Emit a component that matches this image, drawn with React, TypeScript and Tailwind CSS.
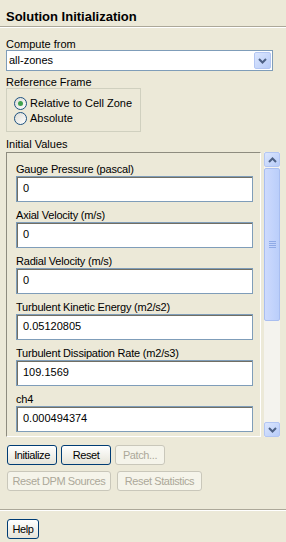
import React from "react";

function Chevron({ up }: { up?: boolean }) {
  return (
    <svg width="9" height="6" viewBox="0 0 9 6">
      <path
        d={up ? "M1 5 L4.5 1.5 L8 5" : "M1 1 L4.5 4.5 L8 1"}
        fill="none"
        stroke="#4d6185"
        strokeWidth="2"
      />
    </svg>
  );
}

function ScrollBtn({ up }: { up?: boolean }) {
  return (
    <div className="h-[15px] w-full rounded-[2px] border border-[#b3c6f3] bg-gradient-to-br from-[#dbe6fe] to-[#b8ccf8] flex items-center justify-center">
      <Chevron up={up} />
    </div>
  );
}

function Field({ label, value }: { label: string; value: string }) {
  return (
    <div className="flex flex-col shrink-0">
      <div className="h-[12px] leading-[12px] whitespace-nowrap tracking-[-0.2px]">{label}</div>
      <div className="mt-[1px] h-[26px] w-[237px] border border-[#7f9db9] bg-white">
        <div className="h-full border-t border-l border-t-[#716f64] border-l-[#716f64] flex items-center pl-[5px] pb-[2px]">
          {value}
        </div>
      </div>
    </div>
  );
}

function XPButton({ children, disabled, w }: { children: React.ReactNode; disabled?: boolean; w: string }) {
  return (
    <div
      className={
        "h-[20px] rounded-[3px] border flex items-center justify-center whitespace-nowrap tracking-[-0.4px] " +
        w +
        (disabled
          ? " border-[#c9c7ba] bg-[#f5f4ea] text-[#aca899]"
          : " border-[#003c74] bg-gradient-to-b from-[#ffffff] to-[#e6e4d9] text-black")
      }
    >
      {children}
    </div>
  );
}

function Radio({ checked }: { checked?: boolean }) {
  return (
    <div className="w-[13px] h-[13px] rounded-full border border-[#1c5180] bg-gradient-to-br from-[#dcdcd5] to-[#ffffff] flex items-center justify-center">
      {checked && <div className="w-[5px] h-[5px] rounded-full bg-[#3fa24e]" />}
    </div>
  );
}

export default function App() {
  const fields: [string, string][] = [
    ["Gauge Pressure (pascal)", "0"],
    ["Axial Velocity (m/s)", "0"],
    ["Radial Velocity (m/s)", "0"],
    ["Turbulent Kinetic Energy (m2/s2)", "0.05120805"],
    ["Turbulent Dissipation Rate (m2/s3)", "109.1569"],
    ["ch4", "0.000494374"],
  ];
  return (
    <div className="w-[286px] h-[542px] bg-[#ece9d8] text-[11px] text-black font-[Liberation_Sans,Arial,sans-serif] flex flex-col overflow-hidden">
      <div className="h-[27px] pl-[6px] pt-[9px] text-[13px] leading-[16px] font-bold border-b border-[#aca899]">
        Solution Initialization
      </div>
      <div className="h-[1px] bg-white" />
      <div className="px-[6px] flex flex-col">
        <div className="mt-[10px] h-[12px] leading-[12px]">Compute from</div>
        <div className="h-[21px] w-[267px] border border-[#7f9db9] bg-white flex items-center">
          <div className="flex-1 pl-[2px]">all-zones</div>
          <div className="w-[17px] h-[17px] mr-[1px] rounded-[2px] border border-[#b3c6f3] bg-gradient-to-br from-[#dbe6fe] to-[#b8ccf8] flex items-center justify-center">
            <Chevron />
          </div>
        </div>
        <div className="mt-[5px] h-[12px] leading-[12px]">Reference Frame</div>
        <div className="w-[135px] h-[44px] border border-[#d0d0bf] pt-[7px] pl-[7px] flex flex-col">
          <div className="h-[15px] flex items-center gap-[3px]">
            <Radio checked />
            <span>Relative to Cell Zone</span>
          </div>
          <div className="h-[15px] flex items-center gap-[3px]">
            <Radio />
            <span>Absolute</span>
          </div>
        </div>
        <div className="mt-[6px] h-[12px] leading-[12px]">Initial Values</div>
        <div className="mt-[2px] flex gap-[3px]">
          <div className="w-[255px] h-[285px] overflow-hidden border-t border-l border-[#8e8c7f] border-r border-r-white border-b border-b-white pt-[10px] pl-[9px] flex flex-col gap-[7px]">
            {fields.map(([l, v]) => (
              <Field key={l} label={l} value={v} />
            ))}
          </div>
          <div className="w-[16px] h-[285px] bg-[#f4f3ee] flex flex-col">
            <ScrollBtn up />
            <div className="mt-[1px] h-[153px] rounded-[2px] border border-[#a9bef0] bg-gradient-to-r from-[#cddafd] to-[#bacefa] flex flex-col items-center justify-center gap-[1px]">
              <div className="w-[7px] h-[1px] bg-[#8faae6]" />
              <div className="w-[7px] h-[1px] bg-[#8faae6]" />
              <div className="w-[7px] h-[1px] bg-[#8faae6]" />
              <div className="w-[7px] h-[1px] bg-[#8faae6]" />
            </div>
            <div className="flex-1" />
            <ScrollBtn />
          </div>
        </div>
        <div className="mt-[8px] pl-[1px] flex gap-[4px]">
          <XPButton w="w-[50px]">Initialize</XPButton>
          <XPButton w="w-[50px]">Reset</XPButton>
          <XPButton w="w-[50px]" disabled>Patch...</XPButton>
        </div>
        <div className="mt-[6px] pl-[1px] flex gap-[6px]">
          <XPButton w="w-[104px]" disabled>Reset DPM Sources</XPButton>
          <XPButton w="w-[85px]" disabled>Reset Statistics</XPButton>
        </div>
      </div>
      <div className="mt-[18px] h-[1px] bg-[#aca899]" />
      <div className="h-[1px] bg-white" />
      <div className="px-[7px] mt-[8px]">
        <XPButton w="w-[32px]">Help</XPButton>
      </div>
    </div>
  );
}
